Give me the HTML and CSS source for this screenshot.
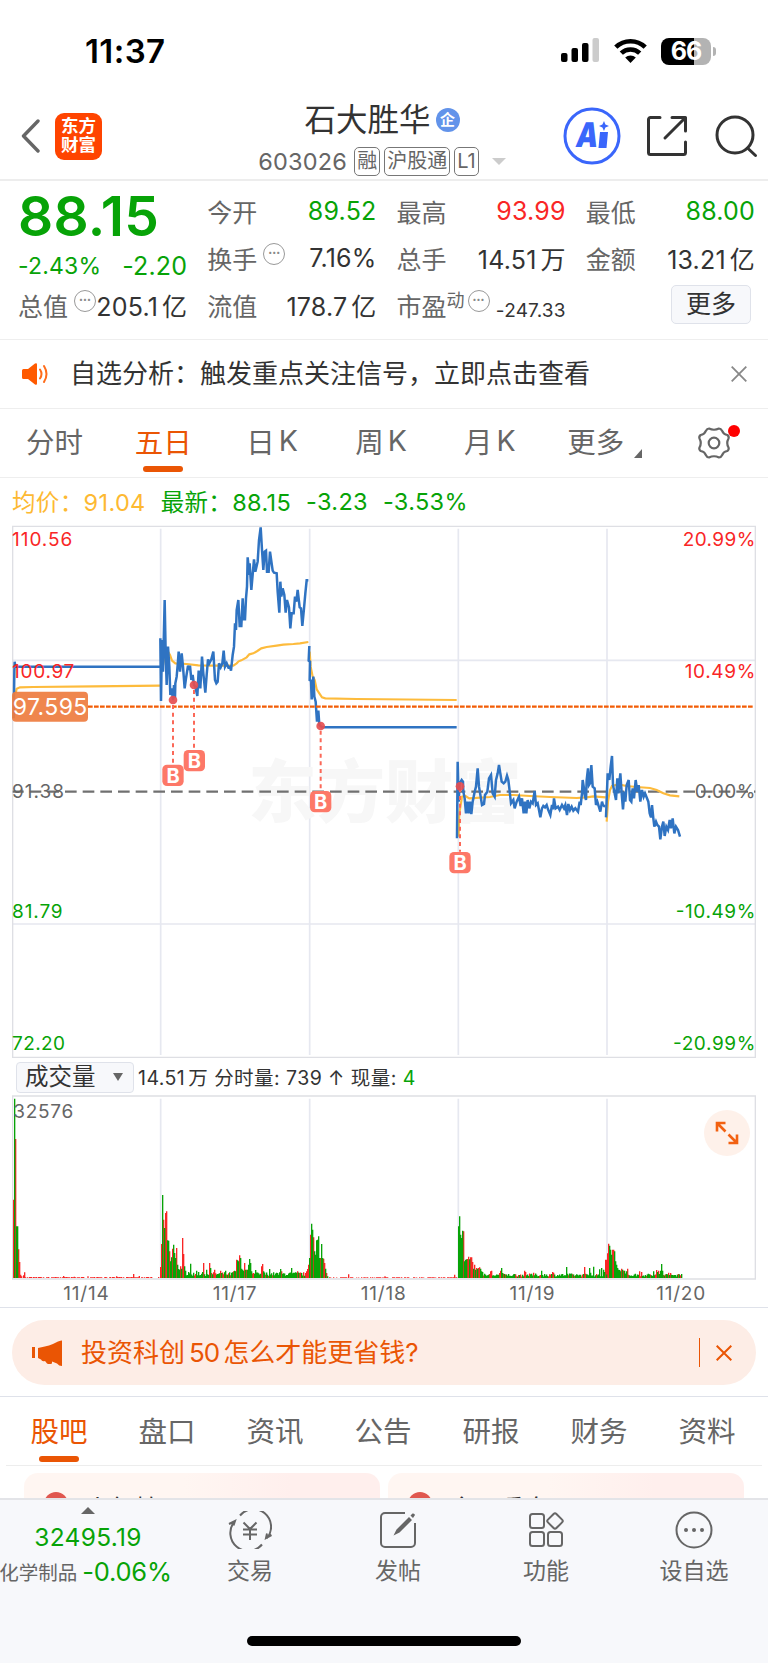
FILE: index.html
```html
<!DOCTYPE html>
<html lang="zh-CN">
<head>
  <meta charset="UTF-8" />
  <meta name="viewport" content="width=device-width, initial-scale=1.0"/>
  <title>石大胜华 603026</title>
  <link rel="stylesheet" href="styles.css">
</head>
<body>
  <div class="status-bar">
    <span class="time">11:37</span>
    <div class="status-icons">
      <svg width="39" height="26" viewBox="0 0 39 26">
        <rect x="0" y="15" width="6.5" height="9" rx="2"/>
        <rect x="10.5" y="10" width="6.5" height="14" rx="2"/>
        <rect x="21" y="5" width="6.5" height="19" rx="2"/>
        <rect x="31.5" y="0" width="6.5" height="24" rx="2" fill="#ccc"/>
      </svg>
      <svg class="wifi" width="33" height="26" viewBox="0 0 33 26" fill="none" stroke="#000" stroke-width="4.6">
        <path d="M1.8 9.2a21 21 0 0 1 29.4 0"/>
        <path d="M7.3 15.2a13.2 13.2 0 0 1 18.4 0"/>
        <path d="M11.2 19.6a7.6 7.6 0 0 1 10.6 0L16.5 25z" fill="#000" stroke="none"/>
      </svg>
      <div class="battery">66</div>
      <div class="battery-tip"></div>
    </div>
  </div>

  <header class="header">
    <div class="header-left">
      <svg width="20" height="34" viewBox="0 0 20 34" fill="none" stroke="#666" stroke-width="3.4" stroke-linecap="round" stroke-linejoin="round"><path d="M17 2 2.5 17 17 32"/></svg>
      <div class="logo">东方<br>财富</div>
    </div>
    <div class="header-title">
      <div class="name">石大胜华<span class="corp">企</span></div>
      <div class="code">603026<span class="tag first">融</span><span class="tag">沪股通</span><span class="tag">L1</span><i class="caret"></i></div>
    </div>
    <div class="header-right">
      <svg width="58" height="58" viewBox="0 0 58 58">
        <circle cx="29" cy="29" r="27" fill="#fff" stroke="#3a66fb" stroke-width="3"/>
        <text x="18" y="40" textLength="22" lengthAdjust="spacingAndGlyphs" transform="skewX(-9)" class="ai">A</text>
        <path d="M37 25h8l-1.500 16h-8zM41 14l1.400 3.400 3.600 1.600-3.600 1.500-1.400 3.500-1.600-3.500-3.400-1.500 3.400-1.600z" fill="#3a66fb"/>
      </svg>
      <svg class="share" width="42" height="42" viewBox="0 0 42 42" fill="none" stroke="#333" stroke-width="3" stroke-linecap="round" stroke-linejoin="round">
        <path d="M14 2.5H4.500a2 2 0 0 0-2 2v33a2 2 0 0 0 2 2h33a2 2 0 0 0 2-2V27M26 2.500h13.500V16M39 3 19 23"/>
      </svg>
      <svg width="44" height="44" viewBox="0 0 44 44" fill="none" stroke="#333" stroke-width="3" stroke-linecap="round"><circle cx="20" cy="21" r="18"/><path d="m32.500 34 8 7.500"/></svg>
    </div>
  </header>

  <section class="quote">
    <div class="quote-col">
      <div class="price">88.15</div>
      <div class="change"><span>-2.43%</span><span class="amount">-2.20</span></div>
      <div class="cell"><label>总值</label><i class="more-dot up">•••</i><b>205.1<u>亿</u></b></div>
    </div>
    <div class="quote-col">
      <div class="cell"><label>今开</label><b class="green">89.52</b></div>
      <div class="cell"><label>换手</label><i class="more-dot">•••</i><b>7.16%</b></div>
      <div class="cell"><label>流值</label><b>178.7<u>亿</u></b></div>
    </div>
    <div class="quote-col">
      <div class="cell"><label>最高</label><b class="red">93.99</b></div>
      <div class="cell"><label>总手</label><b>14.51<u>万</u></b></div>
      <div class="cell"><label>市盈<sup>动</sup></label><i class="more-dot pe">•••</i><b class="small">-247.33</b></div>
    </div>
    <div class="quote-col">
      <div class="cell"><label>最低</label><b class="green">88.00</b></div>
      <div class="cell"><label>金额</label><b>13.21<u>亿</u></b></div>
      <div class="cell"><button class="more-btn">更多</button></div>
    </div>
  </section>

  <section class="notice">
    <svg width="26" height="22" viewBox="0 0 26 22"><path d="M1.500 6H6l7-5.400q2-1 2 1v18.800q0 2-2 1L6 16H1.500Q0 16 0 14.500v-7Q0 6 1.500 6z" fill="#ff5a00"/><path d="M18 6.500q3 4.500 0 9M22 3q5 8 0 16" fill="none" stroke="#ff6c1a" stroke-width="2" stroke-linecap="round"/></svg>
    <p>自选分析：触发重点关注信号，立即点击查看</p>
    <svg width="16" height="16" viewBox="0 0 16 16" stroke="#888" stroke-width="1.800"><path d="m.7.7 14.600 14.600M15.300.7.7 15.300"/></svg>
  </section>

  <nav class="period-tabs">
    <a>分时</a>
    <a class="active">五日</a>
    <a>日<span>K</span></a>
    <a>周<span>K</span></a>
    <a>月<span>K</span></a>
    <a class="more">更多<i></i></a>
    <a class="gear">
      <svg width="34" height="32" viewBox="0 0 34 32" fill="none" stroke="#666" stroke-width="2.200" stroke-linejoin="round"><path d="M12 1.500q5 2.500 10 0 2 0 3 2.200 1.500 3.800 5.300 4.300 2 1.500 1.200 3.500-2.500 4.500 0 9 .8 2-1.200 3.500-3.800.5-5.300 4.300-1 2.200-3 2.200-5-2.500-10 0-2 0-3-2.200Q7.500 24.500 3.700 24q-2-1.500-1.200-3.500 2.500-4.500 0-9Q1.700 9.500 3.700 8 7.500 7.500 9 3.700q1-2.200 3-2.200z"/><circle cx="17" cy="16" r="5.300"/></svg>
      <em></em>
    </a>
  </nav>

  <div class="legend">
    <span class="avg">均价：91.04</span><span>最新：88.15</span><span>-3.23</span><span>-3.53%</span>
  </div>

  <!-- price chart, 3 units per pixel -->
  <svg class="price-chart" viewBox="0 0 2304 1620">
    <g class="grid">
      <path d="M482 26V1605M929 26V1605M1375 26V1605M1821 26V1605M38 421H2266M38 1212H2266"/>
      <path class="frame" d="M38 19H2266V1612H38z"/>
    </g>
    <text class="watermark" x="745" y="890" textLength="820">东方财富</text>
    <path class="mid" d="M38 815H2266"/>
    <g class="avg-line">
      <path d="M47 520 50 506 60 502 100 501 280 499 480 497"/>
      <path d="M486 455 490 430 496 395 504 395 510 405 516 422 526 430 560 432 595 436 640 437 700 437 710 430 716 424 724 421 740 412 748 403 760 400 772 393 784 385 800 381 830 377 850 374 880 372 900 370 925 366"/>
      <path d="M929 395 932 440 938 470 944 480 950 508 958 520 966 532 976 535 1070 537 1370 540"/>
      <path transform="translate(1290 630)" d="M86 320 88 250 96 200 106 198 118 205 150 203 180 201 210 195 250 195 300 198 360 201 440 204 470 202 490 199 527 202M530 275 534 215 540 180 546 168 565 163 590 168 620 171 660 174 680 180 700 190 720 196 748 199"/>
    </g>
    <g class="price-line">
      <path d="M41 595 43 455 44 425 46 440 480 440"/>
      <path d="M481 355 483 543 486 360 489 455 494 240 497 400 500 495 504 380 508 440 511 525 515 505 519 540 522 495 525 535 526 490 530 470 533 435 536 395 540 455 545 400 549 440 554 505 558 475 564 437 568 450 570 437 574 480 578 465 582 495 586 500 592 528 596 452 601 505 606 410 610 460 616 518 620 465 624 418 628 430 634 418 640 395 645 480 649 490 653 485 657 430 662 442 667 430 671 392 675 440 680 430 685 442 690 440 693 452 698 405 702 380 705 310 708 330 710 270 715 240 719 318 724 318 728 235 731 298 735 298 738 235 741 200 743 112 748 165 749 130 754 210 762 118 766 155 773 125 777 60 782 22 786 90 790 150 794 95 798 92 801 155 806 155 810 95 818 152 822 158 830 160 833 215 838 278 841 185 844 230 848 205 853 225 857 278 861 240 867 262 871 325 875 280 881 280 885 230 889 245 893 210 899 262 903 265 907 318 912 265 916 220 920 181 925 181"/>
      <path d="M928 378 926 422 930 425 929 480 933 482 935 538 938 490 940 470 943 530 947 545 951 605 955 572 958 615 966 622 1370 622"/>
      <path transform="translate(1290 630)" d="M81 325 83 95 86 215 89 160 95 150 99 155 100 185 104 205 108 250 112 215 116 250 120 215 124 252 128 215 134 185 138 170 143 115 147 170 152 200 156 225 162 222 165 195 172 185 177 145 183 135 188 190 194 200 198 150 203 130 207 105 211 130 215 155 221 160 226 155 231 137 235 150 238 175 243 220 250 210 254 235 260 215 267 200 272 228 276 205 281 250 285 215 289 250 293 210 298 235 303 215 308 220 314 183 318 225 323 220 327 240 331 262 336 235 340 228 345 232 350 225 354 238 361 255 366 225 369 238 372 205 377 235 384 230 389 240 396 225 402 235 406 225 411 255 415 222 420 240 425 230 430 242 436 235 444 245 449 215 452 225 456 190 458 150 462 175 464 195 468 210 470 150 474 115 477 165 480 160 484 105 488 170 494 175 498 225 502 215 511 245 516 215 519 225 525 230"/>
      <path transform="translate(1290 630)" d="M528 262 533 130 538 150 542 110 546 78 549 165 553 185 558 210 562 145 565 190 571 130 575 190 579 238 583 185 586 215 590 165 596 150 600 210 604 215 608 175 612 205 617 150 622 185 626 165 631 215 636 180 641 200 645 190 651 205 655 215 659 250 663 262 666 225 670 265 673 290 678 275 682 285 687 290 691 328 696 290 700 275 704 318 709 290 714 300 719 270 723 295 728 265 733 310 738 290 744 300 750 320"/>
    </g>
    <g class="axis">
      <text class="up" x="36" y="77" textLength="181">110.56</text>
      <text class="up" x="36" y="475" textLength="187">100.97</text>
      <text x="36" y="835" textLength="156">91.38</text>
      <text class="down" x="36" y="1193" textLength="152">81.79</text>
      <text class="down" x="36" y="1590" textLength="159">72.20</text>
      <text class="up" x="2048" y="77" textLength="218">20.99%</text>
      <text class="up" x="2054" y="475" textLength="212">10.49%</text>
      <text x="2084" y="835" textLength="182">0.00%</text>
      <text class="down" x="2027" y="1193" textLength="239">-10.49%</text>
      <text class="down" x="2019" y="1590" textLength="247">-20.99%</text>
    </g>
    <path class="cost" d="M264 560H2262"/>
    <rect x="36" y="515" width="228" height="90" rx="12" fill="#ee7d41" fill-opacity=".93"/>
    <text class="cost-label" x="38" y="585" textLength="224">97.595</text>
    <g class="marks">
      <path d="M519 555V732M582 510V690M962 632V812M1380 805V995"/>
      <circle cx="519" cy="540" r="13"/><circle cx="582" cy="495" r="13"/><circle cx="962" cy="618" r="13"/><circle cx="1380" cy="799" r="13"/>
      <rect x="487" y="734" width="64" height="64" rx="14"/><text x="519" y="788">B</text>
      <rect x="551" y="690" width="64" height="64" rx="14"/><text x="583" y="744">B</text>
      <rect x="930" y="813" width="64" height="64" rx="14"/><text x="962" y="867">B</text>
      <rect x="1348" y="996" width="64" height="64" rx="14"/><text x="1380" y="1050">B</text>
    </g>
  </svg>

  <div class="volume-bar">
    <button class="volume-btn">成交量<i></i></button>
    <span class="volume-info">14.51<u>万</u> 分时量: 739 ↑ 现量: <b class="green">4</b></span>
  </div>

  <div class="volume-wrap">
    <svg class="volume-chart" viewBox="0 582 2304 567">
      <g class="grid">
        <path d="M482 596V1134M929 596V1134M1375 596V1134M1821 596V1134"/>
        <path class="frame" d="M38 588H2266V1137H38z"/>
      </g>
      <path id="vol-red" fill="#f92626"/>
      <path id="vol-green" fill="#07a307"/>
      <text x="40" y="653" textLength="180">32576</text>
    </svg>
    <button class="expand">
      <svg width="24" height="24" viewBox="0 0 24 24" fill="none" stroke="#f26111" stroke-width="2.600"><path d="M10.500 2H2v8.500M2 2l8.500 8.500M13.500 22H22v-8.500M22 22l-8.500-8.500"/></svg>
    </button>
  </div>
  <div class="dates"><span>11/14</span><span>11/17</span><span>11/18</span><span>11/19</span><span>11/20</span></div>

  <section class="promo">
    <svg width="31" height="26" viewBox="0 0 31 26" fill="#ea5504"><path d="M0 7h3v11H0zM6 8Q18 6 26 1.500 30 0 30 .500V26q-3 0-5-2.500l-5-2v2q-3 1-5 0l-2-2.500q-3 1-4-1.500L6 18z"/></svg>
    <p>投资科创<span>50</span>怎么才能更省钱?</p>
    <i></i>
    <svg width="16" height="16" viewBox="0 0 16 16" stroke="#ea5504" stroke-width="2"><path d="m.7.7 14.600 14.600M15.300.7.7 15.300"/></svg>
  </section>

  <nav class="info-tabs">
    <a class="active">股吧</a><a>盘口</a><a>资讯</a><a>公告</a><a>研报</a><a>财务</a><a>资料</a>
  </nav>

  <div class="cards">
    <div class="card"><i></i><span>人气榜</span></div>
    <div class="card"><i></i><span>今日看盘</span></div>
  </div>

  <footer class="bottom-bar">
    <div class="index">
      <i></i>
      <strong>32495.19</strong>
      <p>化学制品<span>-0.06%</span></p>
    </div>
    <div class="action">
      <svg width="44" height="38" viewBox="0 0 44 38" fill="none" stroke="#666" stroke-width="2"><path d="M12 4.500A17.500 17.500 0 0 1 39 27M43.500 24l-5.500 3 1-4.500M34 33.500A17.500 17.500 0 0 1 6.500 10.500M1 13l6-3-1.500 4.500M15.500 11.500l6.500 6.500 6.500-6.500M15 18.500h14M15 23.500h14M22 18v11"/></svg>
      <span>交易</span>
    </div>
    <div class="action">
      <svg width="38" height="38" viewBox="0 0 38 38" fill="none" stroke="#666" stroke-width="2"><path d="M26 2H6a4 4 0 0 0-4 4v26a4 4 0 0 0 4 4h26a4 4 0 0 0 4-4V12"/><path d="m14.500 24.500 3-6L30 6l3 3-12.500 12.500zM31.500 4.500l2-2q2-.5 2.500 1.500l-2 3z" fill="#666" stroke="none"/></svg>
      <span>发帖</span>
    </div>
    <div class="action">
      <svg width="36" height="38" viewBox="0 0 36 38" fill="none" stroke="#666" stroke-width="2"><rect x="2" y="3" width="14" height="14" rx="2.500"/><rect x="2" y="21" width="14" height="14" rx="2.500"/><rect x="20" y="21" width="14" height="14" rx="2.500"/><rect x="21" y="4" width="12" height="12" rx="2" transform="rotate(45 27 10)"/></svg>
      <span>功能</span>
    </div>
    <div class="action">
      <svg width="38" height="38" viewBox="0 0 38 38" fill="none" stroke="#666" stroke-width="2"><circle cx="19" cy="19" r="17.500"/><path d="M11 19h.01M19 19h.01M27 19h.01" stroke-width="4" stroke-linecap="round"/></svg>
      <span>设自选</span>
    </div>
    <div class="home-bar"></div>
  </footer>

  <script src="volume.js"></script>
</body>
</html>
```

FILE: styles.css
```css
* {
  margin: 0;
  padding: 0;
  box-sizing: border-box;
}

body {
  width: 768px;
  height: 1663px;
  overflow: hidden;
  display: flex;
  flex-direction: column;
  background: #fff;
  color: #333;
  font-family: Inter, "Noto Sans CJK SC", sans-serif;
}

body > * {
  flex-shrink: 0;
}

i, em {
  font-style: normal;
}

u {
  text-decoration: none;
}

button {
  font-family: inherit;
  color: inherit;
}

svg {
  display: block;
}

.green {
  color: #07a307;
}

.red {
  color: #f92626;
}

/* status bar */
.status-bar {
  height: 102px;
  padding: 0 52px 0 85px;
  display: flex;
  align-items: center;
  justify-content: space-between;
  color: #000;
}

.time {
  font-size: 33px;
  font-weight: 600;
  letter-spacing: 0.4px;
}

.status-icons {
  display: flex;
  align-items: center;
}

.wifi {
  margin: 0 14px 0 14px;
}

.battery {
  width: 50px;
  height: 27px;
  border-radius: 8px;
  background: linear-gradient(90deg, #000 66%, #b3b3b3 66%);
  color: #fff;
  font-size: 25px;
  font-weight: 700;
  line-height: 27px;
  text-align: center;
  letter-spacing: -1px;
}

.battery-tip {
  width: 3px;
  height: 9px;
  margin-left: 2px;
  border-radius: 0 3px 3px 0;
  background: #b3b3b3;
}

/* header */
.header {
  height: 79px;
  padding: 0 9px 0 21px;
  border-bottom: 2px solid #ededed;
  display: flex;
  justify-content: space-between;
}

.header-left {
  width: 187px;
  height: 68px;
  display: flex;
  align-items: center;
  gap: 14px;
}

.logo {
  width: 47px;
  height: 47px;
  border-radius: 9px;
  background: #ff4400;
  color: #fff;
  font-size: 17.5px;
  font-weight: 700;
  line-height: 19px;
  padding-top: 3px;
  text-align: center;
}

.header-title {
  width: 300px;
  margin-left: -7px;
  text-align: center;
}

.name {
  height: 36px;
  display: flex;
  align-items: center;
  justify-content: center;
  font-size: 31.5px;
  line-height: 36px;
}

.corp {
  width: 24px;
  height: 24px;
  margin-left: 5px;
  border-radius: 50%;
  background: #6293ea;
  color: #fff;
  font-size: 15px;
  font-weight: 700;
  line-height: 23px;
}

.code {
  height: 46px;
  display: flex;
  align-items: center;
  justify-content: center;
  font-size: 23.5px;
  letter-spacing: 0.2px;
  color: #666;
}

.tag {
  height: 29px;
  margin-left: 4px;
  padding: 0 2px;
  border: 1.5px solid #777;
  border-radius: 5px;
  font-size: 20px;
  line-height: 26px;
  letter-spacing: 0;
}

.tag.first {
  margin-left: 7px;
}

.caret {
  margin-left: 13px;
  border: 7px solid transparent;
  border-top-color: #ccc;
  border-bottom: 0;
}

.header-right {
  height: 68px;
  display: flex;
  align-items: center;
}

.share {
  margin: 0 27px 0 25px;
}

.ai {
  font-size: 34px;
  font-weight: 900;
  fill: #3a66fb;
}

/* quote */
.quote {
  height: 159px;
  padding: 8px 13px 0 18px;
  border-bottom: 1px solid #eee;
  display: flex;
  gap: 20px;
}

.quote-col {
  width: 169.5px;
}

.price {
  height: 54px;
  line-height: 54px;
  font-size: 55px;
  font-weight: 600;
  letter-spacing: 0.3px;
  color: #07a307;
}

.change {
  height: 40px;
  padding-top: 5px;
  display: flex;
  justify-content: space-between;
  align-items: center;
  font-size: 23px;
  letter-spacing: 0.2px;
  color: #07a307;
}

.change .amount {
  font-size: 25px;
}

.cell {
  height: 47px;
  padding-bottom: 4px;
  display: flex;
  align-items: center;
  white-space: nowrap;
}

.cell label {
  font-size: 25px;
  color: #666;
}

.cell b {
  margin-left: auto;
  font-weight: 400;
  font-size: 25px;
  letter-spacing: 0.2px;
}

.cell u {
  margin-left: 4px;
}

.cell b.small {
  padding-top: 11px;
  font-size: 19px;
}

.cell sup {
  font-size: 18px;
  line-height: 1;
  vertical-align: 9px;
}

.more-dot {
  width: 22px;
  height: 22px;
  margin: -8px 0 0 6px;
  border: 1.5px solid #999;
  border-radius: 50%;
  font-size: 7px;
  line-height: 18px;
  text-align: center;
  color: #888;
}

.more-dot.up {
  margin-right: -6px;
}

.more-dot.pe {
  margin-left: 3px;
}

.more-btn {
  width: 80px;
  height: 39px;
  margin: -1px 4px 0 auto;
  border: 1.5px solid #dfe2ea;
  border-radius: 5px;
  background: #f7f8fb;
  font-size: 25px;
  line-height: 35px;
}

/* notice */
.notice {
  height: 69px;
  padding: 0 21px 0 22px;
  border-bottom: 1px solid #eee;
  display: flex;
  align-items: center;
}

.notice p {
  flex: 1;
  margin-left: 22px;
  padding-bottom: 5px;
  font-size: 26px;
}

/* period tabs */
.period-tabs {
  height: 69px;
  border-bottom: 1px solid #eee;
  display: flex;
}

.period-tabs a {
  flex: 1;
  position: relative;
  padding-bottom: 5px;
  display: flex;
  align-items: center;
  justify-content: center;
  font-size: 28.5px;
  color: #666;
}

.period-tabs span {
  margin-left: 4px;
}

.period-tabs a.active,
.info-tabs a.active {
  color: #ea5504;
}

.period-tabs .active::after,
.info-tabs .active::after {
  content: "";
  position: absolute;
  left: 50%;
  bottom: 5px;
  width: 40px;
  height: 6px;
  margin-left: -20px;
  border-radius: 3px;
  background: #ea5504;
}

.period-tabs .more {
  padding-left: 6px;
}

.period-tabs .more i {
  margin: 25px 0 0 10px;
  border-left: 8px solid transparent;
  border-bottom: 9px solid #666;
}

.period-tabs .gear {
  padding-bottom: 0;
}

.gear em {
  position: absolute;
  left: 69px;
  top: 16px;
  width: 12px;
  height: 12px;
  border-radius: 50%;
  background: #f00;
}

.legend {
  height: 42px;
  padding: 4px 0 0 12px;
  display: flex;
  align-items: center;
  gap: 15px;
  font-size: 23.5px;
  letter-spacing: 0.35px;
  color: #07a307;
}

.legend .avg {
  color: #fdb932;
}

/* charts */
.price-chart {
  width: 768px;
  height: 540px;
}

.grid path {
  fill: none;
  stroke: #e6e8f0;
  stroke-width: 5;
}

.grid .frame {
  stroke: #dedfe4;
  stroke-width: 4;
}

.watermark {
  font-size: 205px;
  font-weight: 900;
  fill: #f7f7f7;
}

.mid {
  stroke: #707070;
  stroke-width: 6.5;
  stroke-dasharray: 35 18;
  stroke-dashoffset: 2;
}

.avg-line path {
  fill: none;
  stroke: #fdbb3c;
  stroke-width: 6.5;
}

.price-line path {
  fill: none;
  stroke: #2f73c2;
  stroke-width: 7.5;
}

.axis text,
.volume-chart text {
  font-size: 57px;
  fill: #666;
}

.axis .up {
  fill: #f92626;
}

.axis .down {
  fill: #07a307;
}

.cost {
  stroke: #f25c05;
  stroke-width: 7;
  stroke-dasharray: 14 4;
}

.cost-label {
  font-size: 69px;
  fill: #fff;
}

.marks path {
  stroke: #fb6858;
  stroke-width: 6;
  stroke-dasharray: 12 11;
}

.marks circle {
  fill: #e64e50;
  fill-opacity: 0.92;
}

.marks rect {
  fill: #fd7868;
}

.marks text {
  font-size: 60px;
  font-weight: 700;
  text-anchor: middle;
  fill: #fff;
}

.volume-bar {
  height: 34px;
  padding-left: 16px;
  display: flex;
  align-items: center;
}

.volume-btn {
  width: 118px;
  height: 31px;
  border: 1.5px solid #dfe2ea;
  border-radius: 4px;
  background: #f7f8fb;
  display: flex;
  align-items: center;
  padding-left: 8px;
  font-size: 23.5px;
  line-height: 28px;
}

.volume-btn i {
  margin-left: 17px;
  border: 5px solid transparent;
  border-top: 8px solid #666;
  border-bottom: 0;
}

.volume-info {
  margin-left: 4px;
  padding-bottom: 2px;
  font-size: 19.5px;
  letter-spacing: 0.45px;
}

.volume-info u {
  margin-left: 3px;
}

.volume-info b {
  font-weight: 400;
}

.volume-wrap {
  position: relative;
}

.volume-chart {
  width: 768px;
  height: 189px;
}

.expand {
  position: absolute;
  right: 18px;
  top: 16px;
  width: 46px;
  height: 46px;
  border: 0;
  border-radius: 50%;
  background: #fef1ea;
  display: flex;
  align-items: center;
  justify-content: center;
}

.dates {
  height: 25px;
  padding: 0 12px;
  border-bottom: 1px solid #dfe2ea;
  display: flex;
  font-size: 19px;
  letter-spacing: 0.8px;
  line-height: 22px;
  color: #666;
}

.dates span {
  width: 148.7px;
  text-align: center;
}

/* promo */
.promo {
  height: 65px;
  margin: 12px 12px 11px;
  padding: 0 24px 0 20px;
  border-radius: 33px;
  background: #fdede6;
  display: flex;
  align-items: center;
  color: #ea5504;
}

.promo p {
  flex: 1;
  margin-left: 18px;
  padding-bottom: 4px;
  font-size: 26px;
}

.promo span {
  margin: 0 4px;
  letter-spacing: -1px;
}

.promo i {
  width: 1.5px;
  height: 29px;
  margin-right: 16px;
  background: #ea5504;
}

/* info tabs */
.info-tabs {
  height: 70px;
  padding: 0 7px 0 5px;
  border-top: 1px solid #dfe2ea;
  background: linear-gradient(#ededed, #ededed) 6px bottom / 756px 1px no-repeat;
  display: flex;
}

.info-tabs a {
  flex: 1;
  position: relative;
  text-align: center;
  font-size: 28.5px;
  line-height: 70px;
  color: #666;
}

.info-tabs .active::after {
  bottom: 4px;
}

/* cards, cut off by the bottom bar */
.cards {
  height: 32px;
  padding: 7px 24px 0;
  overflow: hidden;
  display: flex;
  gap: 8px;
}

.card {
  width: 356px;
  height: 120px;
  padding: 19px 20px;
  border-radius: 14px;
  background: linear-gradient(90deg, #fff6f2 45%, #ffefed 75%);
  display: flex;
  gap: 17px;
}

.card i {
  width: 24px;
  height: 24px;
  border-radius: 50%;
  background: #e0574f;
}

.card span {
  padding-top: 2px;
  font-size: 25px;
  line-height: 30px;
}

/* bottom bar */
.bottom-bar {
  height: 165px;
  border-top: 2px solid #e3e4e8;
  background: #f7f8fb;
  display: flex;
  flex-wrap: wrap;
  align-content: flex-start;
}

.index {
  width: 176px;
  height: 130px;
  display: flex;
  flex-direction: column;
  align-items: center;
  color: #07a307;
  white-space: nowrap;
}

.index i {
  margin-top: 7px;
  border: 7px solid transparent;
  border-bottom-color: #666;
  border-top: 0;
}

.index strong {
  margin-top: 8px;
  font-size: 24.5px;
  font-weight: 400;
  line-height: 30px;
  letter-spacing: 0.3px;
}

.index p {
  height: 38px;
  margin-left: -5px;
  display: flex;
  align-items: center;
  gap: 5px;
  font-size: 19.5px;
  color: #666;
}

.index p span {
  font-size: 25.5px;
  letter-spacing: -0.2px;
  color: #07a307;
}

.action {
  width: 148px;
  height: 130px;
  padding-top: 11px;
  display: flex;
  flex-direction: column;
  align-items: center;
}

.action span {
  margin-top: 5px;
  font-size: 23px;
  line-height: 34px;
  color: #666;
}

.home-bar {
  width: 274px;
  height: 10px;
  margin: 6px auto 0;
  border-radius: 5px;
  background: #000;
}
```

FILE: volume.js
```js
// each day: first x, last x, quiet level, then [x, height] bars; green bars are negative
const days = [
  { from: 41, to: 480, low: 2, flat: true, bars: [[41, 235], [44, -538], [47, 417], [50, -155], [53, -155], [56, 86], [59, 48], [62, 10], [65, 5], [71, 8], [74, 17], [191, 6], [223, 4], [264, 5], [350, 5], [401, 12], [418, 6]] },
  { from: 482, to: 928, low: 12, bars: [[482, 33], [485, 102], [488, -249], [491, 175], [494, -150], [497, 195], [500, 200], [503, -113], [506, -112], [509, 80], [512, -50], [515, -62], [518, 88], [521, -100], [524, -75], [527, -60], [530, 90], [533, -40], [536, -27], [539, -25], [542, 35], [545, -28], [548, 120], [551, 72], [554, -35], [557, -22], [572, -43], [590, -22], [596, -18], [611, 45], [620, -25], [629, 45], [632, -30], [644, 25], [662, 22], [677, -22], [701, 20], [704, -22], [707, -20], [710, 55], [713, -53], [716, -50], [719, 68], [722, -60], [725, -28], [728, -25], [731, -22], [734, 45], [737, -25], [740, 25], [743, -25], [746, -40], [749, -57], [752, -45], [755, -20], [761, 15], [767, -24], [785, 35], [788, 42], [791, -20], [809, -27], [842, -27], [845, 20], [875, -30], [893, 20], [917, 15], [920, 20], [923, 27], [926, 40]] },
  { from: 929, to: 1370, low: 1.5, flat: true, bars: [[929, -60], [932, 130], [935, -163], [938, -145], [941, 122], [944, -80], [947, -70], [950, -113], [953, -115], [956, -125], [959, -60], [962, 60], [965, -102], [968, -60], [971, 58], [974, 45], [977, -28], [980, 15], [983, -5], [1046, 11], [1155, 5], [1364, 10]] },
  { from: 1376, to: 1820, low: 9, bars: [[1376, -155], [1379, -185], [1382, -130], [1385, -120], [1388, -142], [1391, 140], [1394, -50], [1397, -55], [1400, -56], [1403, 57], [1406, 64], [1409, -56], [1412, 62], [1415, 62], [1418, 48], [1421, -28], [1424, 40], [1427, -25], [1430, 30], [1433, -28], [1436, 30], [1439, 32], [1442, -28], [1445, -20], [1448, -18], [1472, 20], [1475, 22], [1499, 15], [1502, 22], [1505, -30], [1508, -15], [1574, 22], [1577, 18], [1601, 16], [1625, -22], [1658, 18], [1661, 16], [1700, -33], [1754, 33], [1769, -30], [1772, -16], [1781, -34], [1799, -26], [1805, -30], [1811, -25], [1814, -18], [1817, 55]] },
  { from: 1822, to: 2046, low: 9, bars: [[1820, 55], [1823, 74], [1826, 103], [1829, -97], [1832, -85], [1835, -70], [1838, 85], [1841, 85], [1844, -80], [1847, -50], [1850, -40], [1853, -30], [1856, -25], [1859, -24], [1862, -20], [1865, 28], [1868, -25], [1871, 22], [1874, -22], [1880, -20], [1883, 28], [1919, 20], [1925, 18], [1961, -20], [1970, 24], [1973, -18], [1976, 22], [1982, -22], [1985, -42], [1988, -22], [2006, 16], [2012, 15], [2045, -12]] }
];

const base = 1134;
const paths = { red: "", green: "" };
let seed = 7;
const rand = () => (seed = (seed * 16807) % 2147483647) / 2147483647;

const addBar = (x, h) => {
  paths[h > 0 ? "red" : "green"] += `M${x - 2} ${base}v${-Math.abs(h)}h4v${Math.abs(h)}z`;
};

days.forEach((day) => {
  const used = new Set(day.bars.map((bar) => bar[0]));
  for (let x = day.from; x <= day.to; x++) {
    if ((x - day.from) % 3 || used.has(x) || used.has(x + 1) || used.has(x - 1)) continue;
    if (day.flat) {
      if (rand() > 0.35) addBar(x, day.low + rand());
    } else {
      addBar(x, (rand() > 0.78 ? 1 : -1) * (day.low * 0.5 + rand() * day.low));
    }
  }
  day.bars.forEach(([x, h]) => addBar(x, h));
});

document.getElementById("vol-red").setAttribute("d", paths.red);
document.getElementById("vol-green").setAttribute("d", paths.green);
```
